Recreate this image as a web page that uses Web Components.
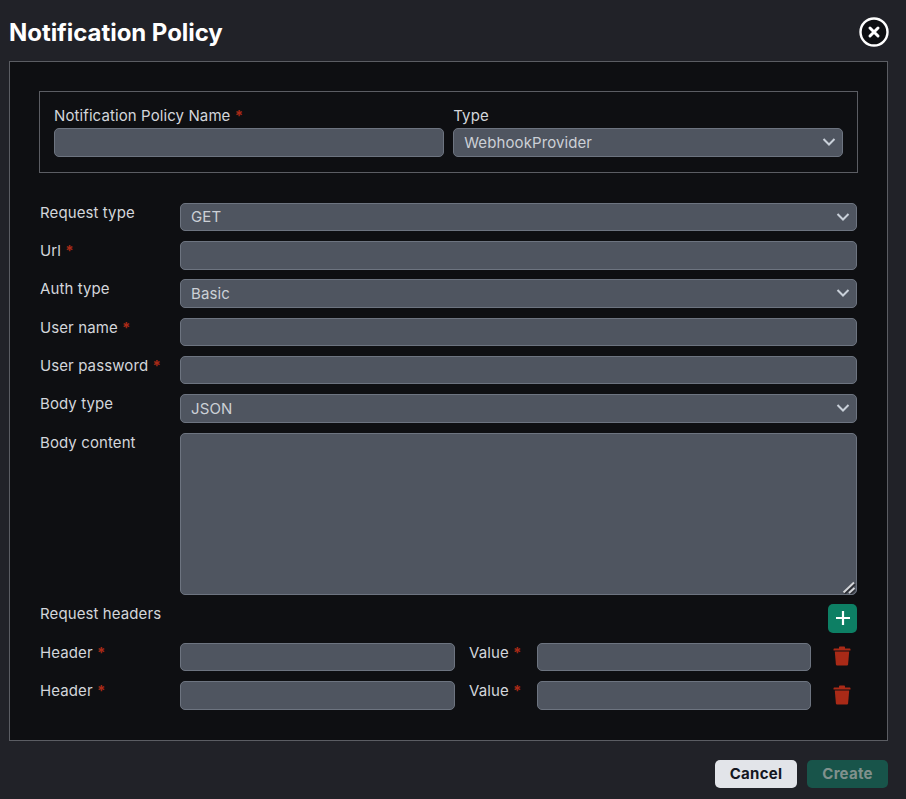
<!DOCTYPE html>
<html><head><meta charset="utf-8"><title>Notification Policy</title>
<style>
html,body{margin:0;height:100%;background:#212228}
body{font-family:"Inter","Liberation Sans",sans-serif}
</style></head><body>
<np-dialog>
  <np-box>
    <np-group>
      <np-stack label="Notification Policy Name" required><np-input></np-input></np-stack>
      <np-stack label="Type"><np-select value="WebhookProvider"></np-select></np-stack>
    </np-group>
    <np-row label="Request type"><np-select value="GET"></np-select></np-row>
    <np-row label="Url" required><np-input></np-input></np-row>
    <np-row label="Auth type"><np-select value="Basic"></np-select></np-row>
    <np-row label="User name" required><np-input></np-input></np-row>
    <np-row label="User password" required><np-input></np-input></np-row>
    <np-row label="Body type"><np-select value="JSON"></np-select></np-row>
    <np-row label="Body content"><np-area></np-area></np-row>
    <np-row label="Request headers" tight><np-add></np-add></np-row>
    <np-header-row></np-header-row>
    <np-header-row></np-header-row>
  </np-box>
</np-dialog>
<script>
const FONT='"Inter","Liberation Sans",sans-serif';
const fieldCss=`box-sizing:border-box;width:100%;height:28.4px;background:#4f5560;border:1px solid #6d7480;border-radius:5px;color:#ccd0d6;font:15px ${FONT};letter-spacing:.1px;`;
function def(name,html){
  customElements.define(name,class extends HTMLElement{
    connectedCallback(){
      if(this.shadowRoot)return;
      const r=this.attachShadow({mode:'open'});
      r.innerHTML=typeof html==='function'?html(this):html;
    }
  });
}
const labelHtml=el=>`${el.getAttribute('label')}${el.hasAttribute('required')?' <span class="req">*</span>':''}`;
const labelCss=`.lab{font:15px/20px ${FONT};color:#d3d6db;letter-spacing:.1px}.req{color:#a92a17;font-weight:700}`;

def('np-dialog',`<style>
:host{display:flex;flex-direction:column;box-sizing:border-box;height:799px;padding:0 18px 11px 9px;color:#fff}
.head{display:flex;align-items:center;justify-content:space-between;height:61px}
h1{margin:3px 0 0;font:700 24px ${FONT};letter-spacing:-.05px;color:#fff}
button{all:unset;display:block;width:30px;height:30px;margin:2px -1px 0 0}
.foot{display:flex;justify-content:flex-end;gap:10px;margin-top:19px}
.foot span{display:flex;align-items:center;justify-content:center;height:28px;padding-bottom:1px;box-sizing:border-box;border-radius:5px;font:700 15px ${FONT};letter-spacing:.25px}
.c{width:82px;background:#e2e4e9;color:#14171f}
.k{width:81px;background:#18544a;color:#80918d}
</style>
<div class="head"><h1>Notification Policy</h1>
<button aria-label="Close"><svg width="30" height="30" viewBox="0 0 30 30"><circle cx="15" cy="15" r="13.500" fill="#0e0f12" stroke="#fff" stroke-width="2.400"/><path d="M11 11l8 8M19 11l-8 8" stroke="#fff" stroke-width="3" stroke-linecap="round"/></svg></button></div>
<slot></slot>
<div class="foot"><span class="c">Cancel</span><span class="k">Create</span></div>`);

def('np-box',`<style>:host{display:block;box-sizing:border-box;height:680px;background:#0e0f12;border:1px solid #5b5d63;padding:29px 30px 0}</style><slot></slot>`);

def('np-group',`<style>:host{display:grid;grid-template-columns:1fr 1fr;gap:9.500px;box-sizing:border-box;height:82px;border:1px solid #5b5d63;padding:14px 14px 0;margin:0 -1px 29.800px}</style><slot></slot>`);

def('np-stack',el=>`<style>:host{display:block}${labelCss}.lab{display:block;height:22.400px}</style><span class="lab">${labelHtml(el)}</span><slot></slot>`);

def('np-row',el=>`<style>:host{display:grid;grid-template-columns:140px 1fr;margin-bottom:9.933px;align-items:start}${labelCss}:host([tight]) .lab{margin-top:-1px}</style><span class="lab">${labelHtml(el)}</span><slot></slot>`);

def('np-input',`<style>:host{display:block}input{${fieldCss}display:block;padding:0 10px;outline:none}</style><input type="text">`);

def('np-select',el=>`<style>:host{display:block;position:relative}
.s{${fieldCss}display:flex;align-items:center;padding:0 10px 1px}
svg{position:absolute;right:7px;top:9px}</style>
<div class="s" role="combobox">${el.getAttribute('value')}</div>
<svg width="14" height="10" viewBox="0 0 14 10"><path d="M1.500 2l5.500 5.500L12.500 2" fill="none" stroke="#c9d0d9" stroke-width="2"/></svg>`);

def('np-area',`<style>:host{display:block;position:relative}
textarea{${fieldCss}display:block;height:162px;resize:vertical;padding:8px 10px;outline:none}
textarea::-webkit-resizer{background:transparent}
svg{position:absolute;right:1px;bottom:1px;pointer-events:none}</style>
<textarea></textarea>
<svg width="14" height="13" viewBox="0 0 14 13"><path d="M2 12.500L12.500 2.500M8 12.500L12.500 8" fill="none" stroke="#2b2d33" stroke-width="3.400"/><path d="M1.500 11.500L12 1.500M7 12L12.500 7" fill="none" stroke="#d4d6da" stroke-width="2"/></svg>`);

def('np-add',`<style>:host{display:flex;justify-content:flex-end;height:28.400px}
button{all:unset;display:flex;align-items:center;justify-content:center;width:29px;height:29px;margin-top:-.7px;border-radius:5px;background:#0d7f64}</style>
<button aria-label="Add"><svg width="14" height="14" viewBox="0 0 14 14"><path d="M7 0v14M0 7h14" stroke="#fff" stroke-width="2.200"/></svg></button>`);

def('np-header-row',`<style>:host{display:grid;grid-template-columns:140px 275px 82px 274px 46px;margin-bottom:9.933px;align-items:start}
${labelCss}
.v{padding-left:14px}
.d{display:flex;justify-content:center;padding:3.500px 0 0 15px}
</style>
<span class="lab">Header <span class="req">*</span></span><np-input></np-input>
<span class="lab v">Value <span class="req">*</span></span><np-input></np-input>
<span class="d"><svg width="18" height="20" viewBox="0 0 18 20"><path d="M6 2.500V1.500C6 .9 6.500.5 7 .5h4c.5 0 1 .4 1 1v1h4.500c.6 0 1 .4 1 1v1H.5v-1c0-.6.4-1 1-1z" fill="#a92a17"/><path d="M1.800 5.500h14.400l-1.100 13c-.1.6-.5 1-1.100 1H4c-.6 0-1-.4-1.100-1z" fill="#a92a17"/></svg></span>`);
</script>
</body></html>
